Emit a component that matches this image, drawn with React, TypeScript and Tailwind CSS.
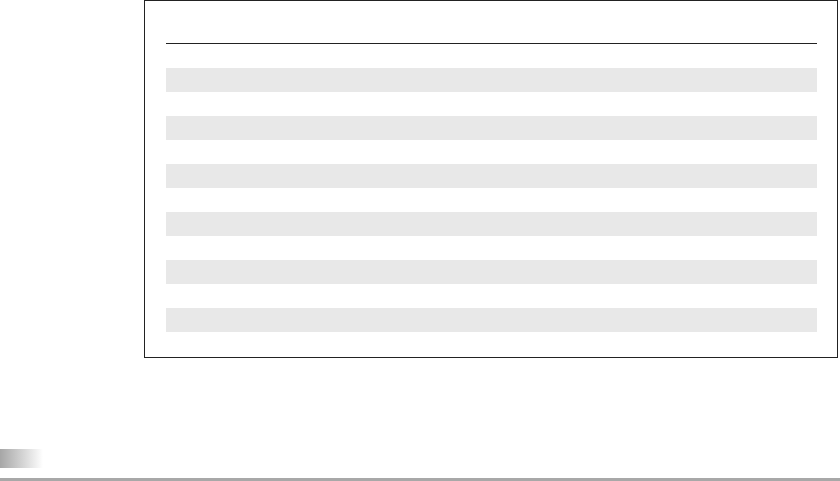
const rows = [0, 1, 2, 3, 4, 5];

export default function App() {
  return (
    <div className="w-[840px] h-[481px] bg-white overflow-hidden flex flex-col">
      {/* Table panel */}
      <div className="ml-[144px] w-[694px] h-[358px] border border-[#222222] pl-[21px] pr-[20px] pt-[42px]">
        <div className="h-px bg-[#222222]"></div>
        <div className="mt-[24px] flex flex-col gap-[24px]">
          {rows.map((r) => (
            <div key={r} className="h-[24px] bg-[#e8e8e8]"></div>
          ))}
        </div>
      </div>

      {/* Footer */}
      <div className="mt-[91px] w-[43px] h-[19px] bg-gradient-to-r from-[#a6a6a6] to-white"></div>
      <div className="mt-[10px] h-[3px] bg-[#a8a8a8]"></div>
    </div>
  );
}
